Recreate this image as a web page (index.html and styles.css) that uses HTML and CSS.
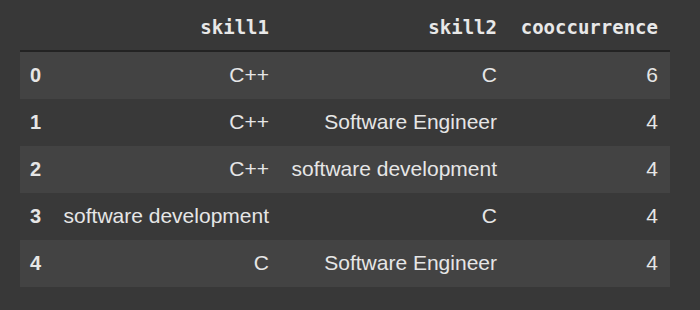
FILE: index.html
```html
<!DOCTYPE html>
<html>
<head>
<meta charset="utf-8">
<link rel="stylesheet" href="styles.css">
</head>
<body>
<table class="df">
  <thead>
    <tr>
      <th class="idx"></th>
      <th class="c1">skill1</th>
      <th class="c2">skill2</th>
      <th class="c3">cooccurrence</th>
    </tr>
  </thead>
  <tbody>
    <tr class="odd"><th class="idx">0</th><td>C++</td><td>C</td><td>6</td></tr>
    <tr><th class="idx">1</th><td>C++</td><td>Software Engineer</td><td>4</td></tr>
    <tr class="odd"><th class="idx">2</th><td>C++</td><td>software development</td><td>4</td></tr>
    <tr><th class="idx">3</th><td>software development</td><td>C</td><td>4</td></tr>
    <tr class="odd"><th class="idx">4</th><td>C</td><td>Software Engineer</td><td>4</td></tr>
  </tbody>
</table>
</body>
</html>
```
FILE: styles.css
```css
html, body {
  margin: 0;
  padding: 0;
  background: #383838;
}
.df {
  margin-left: 20px;
  border-collapse: collapse;
  border-spacing: 0;
  table-layout: fixed;
  color: #e6e6e6;
}
.df thead th {
  height: 51px;
  padding: 4px 10px 0 10px;
  box-sizing: border-box;
  font-family: "DejaVu Sans Mono", monospace;
  font-weight: bold;
  font-size: 19px;
  text-align: right;
  border-bottom: 2px solid #232323;
  color: #e8e8e8;
}
.df thead th.idx { width: 35px; }
.df thead th.c1 { width: 223px; padding-right: 9px; }
.df thead th.c2 { width: 229px; }
.df thead th.c3 { width: 163px; padding-right: 12px; }
.df tbody tr { height: 47px; background: #393939; }
.df tbody tr.odd { background: #434343; }
.df tbody tr:first-child { height: 48px; }
.df tbody th.idx {
  font-family: "Liberation Sans", Arial, sans-serif;
  font-weight: bold;
  font-size: 20px;
  text-align: left;
  padding: 0 0 1px 10px;
}
.df tbody td {
  font-family: "Liberation Sans", Arial, sans-serif;
  font-size: 21px;
  text-align: right;
  padding: 0 10px 1px 8px;
  white-space: nowrap;
}
.df tbody td:nth-child(2) { padding-right: 9px; }
.df tbody td:nth-child(4) { padding-right: 12px; }
```
